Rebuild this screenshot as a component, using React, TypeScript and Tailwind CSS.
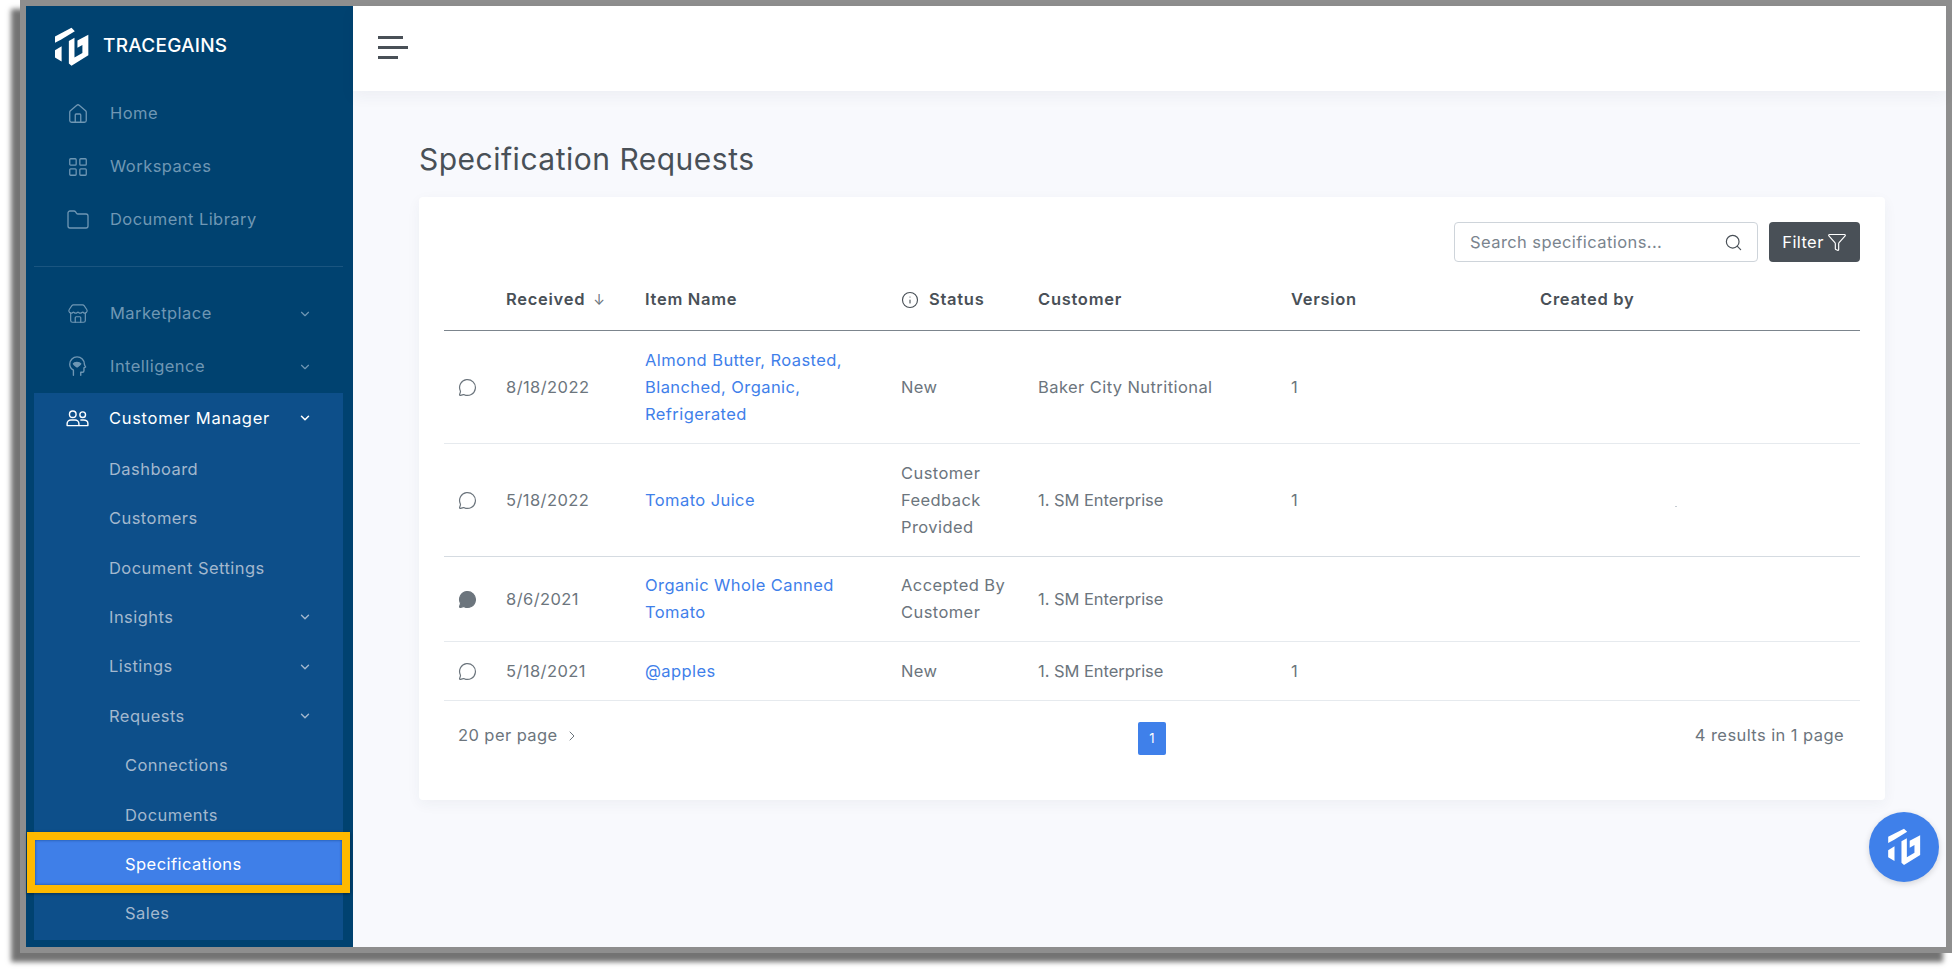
import React from "react";
import { House, LayoutGrid, Folder, Store, ChevronDown, ChevronRight, MessageCircle, Search, Funnel, Info } from "lucide-react";

const FONT = "font-['Inter','Noto_Sans',sans-serif]";

function Logo({ className }: { className: string }) {
  return (
    <svg viewBox="160 80 106 120" className={className} fill="currentColor">
      <path d="M163 108 L213 82 L223 92 L182 117 L163 127 Z" />
      <path d="M163 150 L183 138 V184 L163 172 Z" />
      <path d="M205 122 L222 112 V172 L246 158 V134 L231 142 V120 L264 103 V165 L213 197 L205 190 Z" />
    </svg>
  );
}

function HeadIcon() {
  return (
    <svg viewBox="0 0 24 24" className="w-[22px] h-[24px]" fill="none" stroke="currentColor" strokeWidth="1.5" strokeLinecap="round" strokeLinejoin="round">
      <path d="M7 21v-5.500C4.500 14 3 11.500 3 9a8 8 0 0 1 16 0c0 1 .4 1.600 1.300 3l-1.800 1v3c0 1-.8 1.700-1.700 1.700H15V21" />
      <path d="M7 8.500c1-2 6.500-2 8 0-.6 1.400-2.600 2.500-4 3.500-1.400-1-3.400-2-4-3.500Z" fill="currentColor" />
    </svg>
  );
}

function PeopleIcon() {
  return (
    <svg viewBox="0 0 24 18" className="w-[23px] h-[17px]" fill="none" stroke="currentColor" strokeWidth="1.5" strokeLinejoin="round">
      <circle cx="7" cy="4.500" r="3.500" />
      <circle cx="17.500" cy="5" r="3" />
      <path d="M1 16.500v-2c0-2.500 2-4 4-4h4.500c2 0 4 1.500 4 4v2Z" />
      <path d="M15 10.500h3.500c2.500 0 4.500 1.500 4.500 3.500v2.500h-9.500" />
    </svg>
  );
}

const mainNav = [
  { label: "Home", icon: <House className="w-[22px] h-[22px]" strokeWidth={1.4} /> },
  { label: "Workspaces", icon: <LayoutGrid className="w-[22px] h-[22px]" strokeWidth={1.4} /> },
  { label: "Document Library", icon: <Folder className="w-[24px] h-[24px]" strokeWidth={1.3} /> },
];

const NAV_TEXT = "text-[16.5px] tracking-[0.45px]";

function NavRow({ label, icon, chevron }: { label: string; icon: React.ReactNode; chevron?: boolean }) {
  return (
    <div className={`h-[53px] flex items-center text-[#6f97b4] ${NAV_TEXT}`}>
      <div className="w-[84px] pl-[26px] flex justify-center shrink-0">
        <span className="-translate-x-[3px]">{icon}</span>
      </div>
      <span className="flex-1 whitespace-nowrap">{label}</span>
      {chevron && <ChevronDown className="w-[14px] h-[14px] mr-[41px]" strokeWidth={2} />}
    </div>
  );
}

function SubRow({ label, chevron, inset }: { label: string; chevron?: boolean; inset?: boolean }) {
  return (
    <div className={`h-[49.4px] flex items-center text-[#a3b8ce] ${NAV_TEXT} ${inset ? "pl-[91px]" : "pl-[75px]"}`}>
      <span className="flex-1">{label}</span>
      {chevron && <ChevronDown className="w-[14px] h-[14px] mr-[31px]" strokeWidth={2.4} />}
    </div>
  );
}

const rows = [
  { h: "h-[113px]", filled: false, date: "8/18/2022", item: ["Almond Butter, Roasted,", "Blanched, Organic,", "Refrigerated"], status: ["New"], cust: "Baker City Nutritional", custClass: "", ver: "1", border: "border-[#e6eaee]", speck: false },
  { h: "h-[113px]", filled: false, date: "5/18/2022", item: ["Tomato Juice"], status: ["Customer", "Feedback", "Provided"], cust: "1. SM Enterprise", custClass: "tracking-[-0.05px]", ver: "1", border: "border-[#d5dbe1]", speck: true },
  { h: "h-[85px]", filled: true, date: "8/6/2021", item: ["Organic Whole Canned", "Tomato"], status: ["Accepted By", "Customer"], cust: "1. SM Enterprise", custClass: "tracking-[-0.05px]", ver: "", border: "border-[#e6eaee]", speck: false },
  { h: "h-[59px]", filled: false, date: "5/18/2021", item: ["@apples"], status: ["New"], cust: "1. SM Enterprise", custClass: "tracking-[-0.05px]", ver: "1", border: "border-[#e6eaee]", speck: false },
];

const GRID = "grid grid-cols-[62px_139px_256px_137px_253px_249px_318px] items-center";
const BODY_TEXT = "text-[16.5px] tracking-[0.42px]";

export default function App() {
  return (
    <div className={`w-[1952px] h-[973px] bg-white overflow-hidden ${FONT}`}>
      <div className="relative ml-[20px] w-[1932px] h-[953px] border-[6px] border-[#8e8e8e] flex bg-[#f8f9fd] shadow-[-9px_9px_5px_rgba(0,0,0,0.55)]">
        <aside className="w-[327px] shrink-0 bg-[#004270] flex flex-col">
          <div className="h-[81px] flex items-center pl-[28px] text-white">
            <Logo className="w-[35px] h-[40px]" />
            <span className="ml-[14px] text-[19px] font-medium tracking-[0.25px]">TRACEGAINS</span>
          </div>
          {mainNav.map((n) => (
            <NavRow key={n.label} label={n.label} icon={n.icon} />
          ))}
          <div className="ml-[8px] mr-[10px] mt-[20px] mb-[20px] h-px bg-[#1a5580]" />
          <NavRow label="Marketplace" icon={<Store className="w-[24px] h-[22px]" strokeWidth={1.3} />} chevron />
          <NavRow label="Intelligence" icon={<HeadIcon />} chevron />
          <div className="ml-[8px] mr-[10px] flex-1 mb-[7px] bg-[#0d4f8a]">
            <div className="h-[51.5px] flex items-center text-white text-[16.5px] tracking-[0.7px] pb-[1px]">
              <div className="w-[75px] pl-[32px] shrink-0"><PeopleIcon /></div>
              <span className="flex-1">Customer Manager</span>
              <ChevronDown className="w-[14px] h-[14px] mr-[31px]" strokeWidth={2.6} />
            </div>
            <SubRow label="Dashboard" />
            <SubRow label="Customers" />
            <SubRow label="Document Settings" />
            <SubRow label="Insights" chevron />
            <SubRow label="Listings" chevron />
            <SubRow label="Requests" chevron />
            <SubRow label="Connections" inset />
            <SubRow label="Documents" inset />
            <div className="relative h-[49.4px] flex items-center">
              <div className="absolute left-[-7px] right-[-7px] top-[-7.5px] h-[61px] border-[8px] border-[#ffb900] bg-[#3f7fe8] shadow-[0_1px_3px_rgba(0,0,0,0.4),inset_0_0_3px_rgba(0,40,90,0.6)]" />
              <span className={`relative pl-[91px] text-white ${NAV_TEXT}`}>Specifications</span>
            </div>
            <SubRow label="Sales" inset />
          </div>
        </aside>

        <div className="flex-1 flex flex-col min-w-0">
          <header className="h-[85px] shrink-0 bg-white flex items-center pl-[25px] shadow-[0_6px_14px_rgba(40,50,70,0.05)]">
            <div className="flex flex-col gap-[7.5px] -mt-[2px]">
              <div className="w-[25px] h-[2.5px] bg-[#495057]" />
              <div className="w-[30px] h-[2.5px] bg-[#495057]" />
              <div className="w-[20px] h-[2.5px] bg-[#495057]" />
            </div>
          </header>

          <main className="flex-1 pl-[66px] pr-[61px] pt-[49px]">
            <h1 className="text-[30px] leading-[38px] text-[#495057] font-normal tracking-[0.5px]">Specification Requests</h1>
            <section className="mt-[19px] h-[603px] bg-white rounded-[4px] shadow-[0_4px_14px_rgba(40,50,70,0.05)] px-[25px] pt-[25px]">
              <div className="flex justify-end gap-[11px]">
                <div className={`w-[304px] h-[40px] rounded-[4px] border border-[#ced4da] flex items-center pl-[15px] pr-[14px] ${BODY_TEXT} text-[#7a848e]`}>
                  <span className="flex-1">Search specifications...</span>
                  <Search className="w-[19px] h-[19px] text-[#495057]" strokeWidth={1.5} />
                </div>
                <button className={`w-[91px] h-[40px] rounded-[4px] bg-[#495057] text-white ${BODY_TEXT} flex items-center justify-center gap-[3px]`}>
                  Filter
                  <Funnel className="w-[20px] h-[20px]" strokeWidth={1.4} />
                </button>
              </div>

              <div className={`${GRID} h-[69px] pt-[7px] border-b border-[#7c858d] text-[16.5px] tracking-[0.72px] font-semibold text-[#495057]`}>
                <span />
                <span className="flex items-center gap-[8px]">Received <span className="font-normal text-[#6c757d] text-[14px]">↓</span></span>
                <span>Item Name</span>
                <span className="flex items-center gap-[10px]">
                  <Info className="w-[18px] h-[18px]" strokeWidth={1.5} />
                  Status
                </span>
                <span>Customer</span>
                <span>Version</span>
                <span>Created by</span>
              </div>

              {rows.map((r) => (
                <div key={r.date} className={`${GRID} ${r.h} border-b ${r.border} ${BODY_TEXT} leading-[27px] text-[#6c757d]`}>
                  <span className="pl-[14px]">
                    <MessageCircle className={`w-[19px] h-[19px] ${r.filled ? "fill-[#6c757d]" : ""}`} strokeWidth={1.5} />
                  </span>
                  <span>{r.date}</span>
                  <span className="text-[#3f80ea] whitespace-nowrap">
                    {r.item.map((l) => <div key={l}>{l}</div>)}
                  </span>
                  <span className="whitespace-nowrap">
                    {r.status.map((l) => <div key={l}>{l}</div>)}
                  </span>
                  <span className={r.custClass}>{r.cust}</span>
                  <span>{r.ver}</span>
                  <span>{r.speck && <div className="w-[2px] h-[1px] ml-[135px] mt-[12px] bg-[#c5ccd3]" />}</span>
                </div>
              ))}

              <div className={`relative flex items-start justify-between pt-[20px] pl-[14px] pr-[16px] ${BODY_TEXT} leading-[27px] text-[#6c757d]`}>
                <span className="flex items-center gap-[6px] mt-[1px]">20 per page <ChevronRight className="w-[16px] h-[16px]" strokeWidth={1.5} /></span>
                <span className="absolute left-[694px] top-[21px] w-[28px] h-[33px] rounded-[2px] bg-[#3f80ea] text-white text-[13px] flex items-center justify-center">1</span>
                <span className="mt-[1px]">4 results in 1 page</span>
              </div>
            </section>
          </main>
        </div>

        <div className="absolute left-[1843px] top-[806px] w-[70px] h-[70px] rounded-full bg-[#3f80ea] text-white flex items-center justify-center shadow-[0_2px_6px_rgba(0,0,0,0.15)]">
          <Logo className="w-[34px] h-[38px]" />
        </div>
      </div>
    </div>
  );
}
